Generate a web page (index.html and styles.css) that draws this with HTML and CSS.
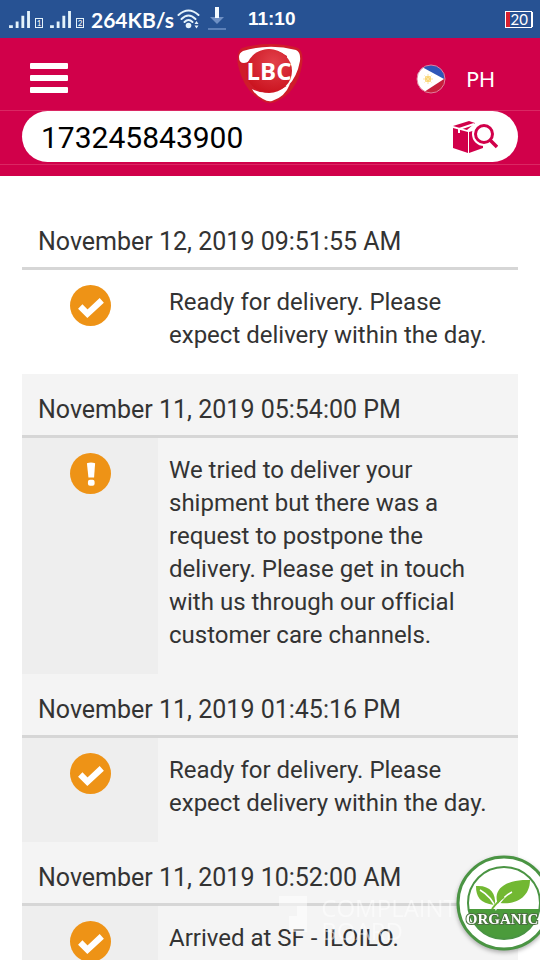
FILE: index.html
```
<!DOCTYPE html>
<html lang="en">
<head>
  <meta charset="utf-8">
  <meta name="viewport" content="width=device-width, initial-scale=1">
  <title>LBC Tracking</title>
  <link rel="stylesheet" href="styles.css">
</head>
<body>
  <!-- shared icons -->
  <svg class="sprite" aria-hidden="true">
    <symbol id="icon-check" viewBox="0 0 40 40">
      <circle cx="20" cy="20" r="20" fill="#ee9316"/>
      <path d="M10 21L17 28L31 15" fill="none" stroke="#fff" stroke-width="6"/>
    </symbol>
    <symbol id="icon-alert" viewBox="0 0 40 40">
      <circle cx="20" cy="20" r="20" fill="#ee9316"/>
      <path d="M16.500 10Q20.500 8.500 24.500 10L23.500 24H18Z" fill="#fff"/>
      <rect x="17.500" y="26" width="6.500" height="6" rx="2" fill="#fff"/>
    </symbol>
    <symbol id="icon-signal" viewBox="0 0 22 20">
      <path d="M0 16h4v3H0zM7 12h3v7H7zM13 6h3v13h-3zM19 1h3v18h-3z" fill="#e4f3fb"/>
    </symbol>
  </svg>

  <div class="status-bar">
    <svg class="signal" aria-hidden="true"><use href="#icon-signal"/></svg>
    <span class="sim">1</span>
    <svg class="signal" aria-hidden="true"><use href="#icon-signal"/></svg>
    <span class="sim">2</span>
    <span class="speed">264KB/s</span>
    <svg class="wifi" viewBox="0 0 22 20" aria-hidden="true">
      <g fill="none" stroke="#e4f3fb" stroke-width="2" stroke-linecap="round">
        <path d="M1 6Q11 -3 21 6"/>
        <path d="M4 10Q11 3 18 10"/>
        <path d="M7 13Q11 9 15 13"/>
      </g>
      <circle cx="11" cy="16.500" r="2.800" fill="#e4f3fb"/>
      <path d="M17 15l2-3 2 3zM17 16.500l2 3 2-3z" fill="#e4f3fb"/>
    </svg>
    <svg class="download" viewBox="0 0 18 24" aria-hidden="true">
      <path d="M2 10h14l-7 7z" fill="#6f90c4"/>
      <path d="M7 0h4v11H7z" fill="#f4fbff"/>
      <path d="M0 22h18" stroke="#6f90c4" stroke-width="1.500"/>
    </svg>
    <time class="clock">11:10</time>
    <span class="battery">20</span>
  </div>

  <header class="header">
    <nav class="navbar">
      <button class="menu-btn" type="button" aria-label="Menu">
        <span></span><span></span><span></span>
      </button>
      <a class="logo" href="#" aria-label="LBC home">
        <svg viewBox="0 0 66 60" aria-hidden="true">
          <defs>
            <radialGradient id="shield" cx="60%" cy="30%" r="70%">
              <stop offset="0" stop-color="#e2404a"/>
              <stop offset="1" stop-color="#cb1420"/>
            </radialGradient>
          </defs>
          <path d="M5 4Q33 -4 61 4Q67 8 65 21Q60 49 38 58Q33 60 28 58Q7 49 1 21Q-1 8 5 4Z" fill="#cf1c2a"/>
          <path d="M6 7Q32 -1 59 6Q64 8 63 17Q60 33 51 42H46L50 12Q30 -1 17 12Q12 19 7 19Q2 19 2 13Q2 9 6 7Z" fill="#fff"/>
          <path d="M15 45Q32 54 53 40Q48 53 35 57Q31 58 26 55Q18 51 15 45Z" fill="#fff"/>
          <ellipse cx="32" cy="27" rx="23" ry="22" fill="url(#shield)"/>
          <text x="32" y="36" text-anchor="middle" class="logo-text">LBC</text>
        </svg>
      </a>
      <button class="country" type="button">
        <svg viewBox="0 0 30 30" aria-hidden="true">
          <defs>
            <clipPath id="flag-clip"><circle cx="15" cy="15" r="14"/></clipPath>
          </defs>
          <g clip-path="url(#flag-clip)">
            <path d="M0 0h30v15H0z" fill="#2f57b8"/>
            <path d="M0 15h30v15H0z" fill="#c61f3c"/>
            <path d="M0 0L6 3L28 15L8 28L0 30Z" fill="#fff"/>
            <circle cx="12" cy="15" r="3" fill="#f9c646"/>
            <path d="M12 10v10M7 15h10M8.500 11.500l7 7M15.500 11.500l-7 7" stroke="#fbe3a0"/>
          </g>
          <circle cx="15" cy="15" r="14" fill="none" stroke="#e27f9d"/>
        </svg>
        <span>PH</span>
      </button>
    </nav>
    <div class="search-row">
      <form class="search">
        <input class="search-input" type="text" value="173245843900" aria-label="Tracking number">
        <button class="search-btn" type="submit" aria-label="Track">
          <svg viewBox="0 0 46 34" aria-hidden="true">
            <path d="M1 8L16 12V33L1 28Z" fill="#d1004a"/>
            <path d="M17 12L31 8V28L17 33Z" fill="#d1004a"/>
            <path d="M1 6L17 1L23 3L15 10Z" fill="#d1004a"/>
            <path d="M7 13V9L22 4" fill="none" stroke="#fff" stroke-width="2"/>
            <circle cx="32" cy="14" r="12" fill="#fff"/>
            <circle cx="32" cy="14" r="8.500" fill="#fff" stroke="#d1004a" stroke-width="3"/>
            <path d="M38 20L45 27" stroke="#d1004a" stroke-width="3.500"/>
          </svg>
        </button>
      </form>
    </div>
  </header>

  <main class="history">
    <section class="event event-latest">
      <h2 class="event-date">November 12, 2019 09:51:55 AM</h2>
      <div class="event-body">
        <div class="event-icon"><svg aria-hidden="true"><use href="#icon-check"/></svg></div>
        <p class="event-text">Ready for delivery. Please expect delivery within the day.</p>
      </div>
    </section>

    <section class="event">
      <h2 class="event-date">November 11, 2019 05:54:00 PM</h2>
      <div class="event-body">
        <div class="event-icon"><svg aria-hidden="true"><use href="#icon-alert"/></svg></div>
        <p class="event-text">We tried to deliver your shipment but there was a request to postpone the delivery. Please get in touch with us through our official customer care channels.</p>
      </div>
    </section>

    <section class="event">
      <h2 class="event-date">November 11, 2019 01:45:16 PM</h2>
      <div class="event-body">
        <div class="event-icon"><svg aria-hidden="true"><use href="#icon-check"/></svg></div>
        <p class="event-text">Ready for delivery. Please expect delivery within the day.</p>
      </div>
    </section>

    <section class="event">
      <h2 class="event-date">November 11, 2019 10:52:00 AM</h2>
      <div class="event-body">
        <div class="event-icon"><svg aria-hidden="true"><use href="#icon-check"/></svg></div>
        <p class="event-text">Arrived at SF - ILOILO.</p>
      </div>
    </section>
  </main>

  <div class="watermark">
    <svg viewBox="0 0 30 40" aria-hidden="true">
      <path d="M0 0h28v20h-10v-10H0zM10 20h18v16H10z" fill="#fff"/>
    </svg>
    <span>COMPLAINTS<br>BOARD</span>
  </div>

  <svg class="organic-badge" viewBox="0 0 96 96" aria-hidden="true">
    <defs>
      <clipPath id="badge-clip"><circle cx="48" cy="48" r="36"/></clipPath>
    </defs>
    <circle cx="48" cy="48" r="46" fill="#fff" stroke="#4a9443" stroke-width="3"/>
    <g clip-path="url(#badge-clip)">
      <path d="M0 54h96v42H0z" fill="#4b9b3b"/>
    </g>
    <circle cx="48" cy="48" r="36" fill="none" stroke="#4a9443" stroke-width="2"/>
    <path d="M42 49C36 34 50 24 74 25C74 42 60 50 44 48Z" fill="#72b832"/>
    <path d="M38 50C24 48 20 42 20 31C34 30 40 38 39 50Z" fill="#72b832"/>
    <path d="M24 35Q36 42 40 54Q46 42 56 37" fill="none" stroke="#fff" stroke-width="1.500"/>
    <path d="M36 54Q42 46 48 42" fill="none" stroke="#72b832" stroke-width="2"/>
    <text x="46" y="69" text-anchor="middle" class="badge-text">ORGANIC</text>
  </svg>
</body>
</html>
```
FILE: styles.css
```
* {
  box-sizing: border-box;
}

body {
  margin: 0;
  height: 100vh;
  overflow: hidden;
  font-family: Roboto, "Liberation Sans", sans-serif;
  font-variant-ligatures: none;
  color: #333;
  background: #fff;
}

button {
  padding: 0;
  border: 0;
  background: none;
  color: inherit;
  font: inherit;
  cursor: pointer;
}

.sprite {
  position: absolute;
  width: 0;
  height: 0;
}

/* Phone status bar */
.status-bar {
  display: flex;
  align-items: center;
  height: 38px;
  padding: 0 8px 0 9px;
  background: #275293;
  color: #fff;
  font-family: Lato, sans-serif;
  font-size: 21px;
}

.signal {
  width: 21px;
  height: 19px;
}

.sim {
  width: 8px;
  height: 10px;
  margin: 8px 7px 0 5px;
  border: 1px solid #e4f3fb;
  font-size: 8px;
  line-height: 8px;
  text-align: center;
}

.speed {
  font-weight: bold;
}

.wifi {
  width: 23px;
  height: 20px;
  margin: 0 8px 0 3px;
}

.download {
  width: 18px;
  height: 24px;
}

.clock {
  margin-left: 22px;
  font-family: "Liberation Sans", sans-serif;
  font-size: 19px;
  font-weight: bold;
}

.battery {
  width: 27px;
  height: 17px;
  margin-left: auto;
  padding-right: 3px;
  border: 1px solid #fff;
  background: linear-gradient(90deg, #d8202f 4px, transparent 4px);
  box-shadow: 2px 0 0 -1px #fff;
  font-size: 15px;
  line-height: 15px;
  text-align: right;
}

/* Header */
.header {
  padding-bottom: 11px;
  background: #d1004a;
}

.navbar {
  display: grid;
  grid-template-columns: 1fr auto 1fr;
  align-items: center;
  height: 73px;
  padding: 0 30px;
  border-bottom: 1px solid #da2763;
}

.menu-btn {
  display: grid;
  gap: 6px;
  width: 38px;
  margin-top: 8px;
}

.menu-btn span {
  height: 6px;
  border-radius: 1px;
  background: #fff;
}

.logo svg {
  display: block;
  width: 66px;
  height: 60px;
}

.logo-text {
  fill: #fff;
  font: bold 24px "Open Sans", sans-serif;
}

.country {
  display: flex;
  align-items: center;
  justify-self: end;
  gap: 20px;
  margin-top: 9px;
  margin-right: 15px;
  color: #fff;
  font-family: Lato, sans-serif;
  font-size: 21px;
}

.country svg {
  width: 30px;
  height: 30px;
}

.search-row {
  padding: 0 22px 2px;
  border-bottom: 1px solid #da2763;
}

.search {
  display: flex;
  align-items: center;
  height: 51px;
  padding: 0 20px 0 19px;
  border-radius: 26px;
  background: #fff;
}

.search-input {
  flex: 1;
  min-width: 0;
  padding: 2px 0 0;
  border: 0;
  outline: 0;
  background: none;
  color: #000;
  font: 30px Roboto, sans-serif;
}

.search-btn svg {
  display: block;
  width: 46px;
  height: 34px;
}

/* Shipment history */
.history {
  padding: 30px 22px 0;
}

.event {
  background: #f4f4f4;
}

.event-date {
  margin: 0;
  padding: 19px 16px 9px;
  border-bottom: 3px solid #d6d6d6;
  font-size: 25px;
  font-weight: normal;
  line-height: 33px;
}

.event-body {
  display: grid;
  grid-template-columns: 136px 1fr;
}

.event-icon {
  padding-top: 15px;
  background: #eee;
  text-align: center;
}

.event-icon svg {
  width: 41px;
  height: 41px;
}

.event-text {
  margin: 0;
  padding: 16px 11px 22px;
  font-size: 24px;
  line-height: 33px;
}

.event-latest,
.event-latest .event-icon {
  background: #fff;
}

/* Overlays */
.watermark {
  position: fixed;
  right: 70px;
  bottom: 18px;
  display: flex;
  gap: 12px;
  color: #fff;
  font: 24px/23px "Open Sans", sans-serif;
  opacity: 0.5;
}

.watermark svg {
  width: 30px;
  height: 40px;
}

.organic-badge {
  position: fixed;
  right: -12px;
  bottom: 9px;
  width: 96px;
  height: 96px;
  filter: drop-shadow(0 2px 2px rgba(0, 0, 0, 0.3));
}

.badge-text {
  fill: #fff;
  stroke: #4a7040;
  stroke-width: 2px;
  paint-order: stroke;
  font: bold 15px "Liberation Serif", serif;
}
```
